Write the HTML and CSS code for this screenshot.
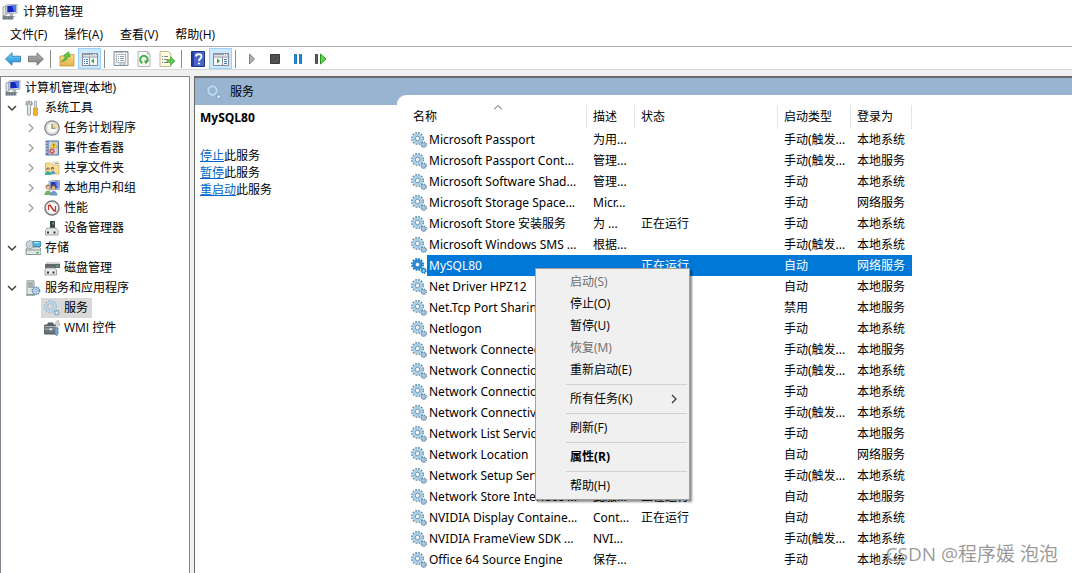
FILE: index.html
```html
<!DOCTYPE html>
<html lang="zh-CN">
<head>
<meta charset="utf-8">
<title>计算机管理</title>
<link rel="stylesheet" href="styles.css">
</head>
<body>
<svg class="defs" aria-hidden="true">
  <defs>
    <linearGradient id="gBlue" x1="0" y1="0" x2="0" y2="1"><stop offset="0" stop-color="#7fd0f7"/><stop offset="1" stop-color="#1689d6"/></linearGradient>
    <linearGradient id="gGrey" x1="0" y1="0" x2="0" y2="1"><stop offset="0" stop-color="#b5b5b5"/><stop offset="1" stop-color="#7c7c7c"/></linearGradient>
    <linearGradient id="gFolder" x1="0" y1="0" x2="0" y2="1"><stop offset="0" stop-color="#f8dc8b"/><stop offset="1" stop-color="#e4b44c"/></linearGradient>
    <symbol id="computer" viewBox="0 0 16 16">
      <path d="M1 3l3-1v9l-3 1z" fill="#e4e7e6" stroke="#7c8586" stroke-width=".7"/>
      <path d="M4 1l11-1v9l-11 1z" fill="#dde2e4" stroke="#8d989d" stroke-width=".7"/>
      <path d="M5.300 2l8.500-.8v6.600l-8.500.8z" fill="#1327bd"/>
      <path d="M10 1.600l3.800-.4v6.600l-1.600.1z" fill="#5577e8"/>
      <path d="M8 10h3v2h2v1H7z" fill="#b4bcbc"/>
      <path d="M.5 12h11v3.500H.5z" fill="#87969a"/>
      <path d="M1 13h10M1 14.800h10" stroke="#56656b" stroke-dasharray="1.600 1"/>
    </symbol>
    <symbol id="tools" viewBox="0 0 16 16">
      <path d="M2 1.200C0 3 .8 5.600 2.500 6.400V14c0 1.800 3 1.800 3 0V6.400c2-.9 2.600-3.600.7-5.200v3.400H4.800V1H3.200v3.600H2z" fill="#e6e9e9" stroke="#7b8588" stroke-width=".8"/>
      <path d="M9.500 1h2v6h-2z" fill="#d8dcdd" stroke="#8d9698" stroke-width=".6"/>
      <path d="M8.500 8h4v2l-.7 1 .7 1v3l-1 .8H9.500l-1-.8v-3l.7-1-.7-1z" fill="#f5b326" stroke="#c98509" stroke-width=".7"/>
    </symbol>
    <symbol id="clock" viewBox="0 0 16 16">
      <circle cx="8" cy="8" r="7.200" fill="#e4e7ea" stroke="#7e878c" stroke-width="1.300"/>
      <circle cx="8" cy="8" r="5.400" fill="#fffaf0" stroke="#c2cbd1" stroke-width=".8"/>
      <path d="M8 2.600A5.400 5.400 0 0 1 13.400 8H8z" fill="#f5d698"/>
      <path d="M8 4v4.200h3.500" fill="none" stroke="#607a91" stroke-width="1.100"/>
    </symbol>
    <symbol id="event" viewBox="0 0 16 16">
      <path d="M2 1h12.500v14H2z" fill="#abc1d8" stroke="#5b7ba0"/>
      <path d="M5 2h8v12H5z" fill="#c9d7e7"/>
      <path d="M3.500 1v14" stroke="#5878a0" stroke-width="2"/>
      <path d="M1 3h3M1 6h3M1 9h3M1 12h3" stroke="#e3e7ea" stroke-width=".9"/>
      <path d="M9.700 1.800l3.500 6h-7z" fill="#ffd531" stroke="#c89b18" stroke-width=".5"/>
      <path d="M9.700 4v2M9.700 6.600v.8" stroke="#333" stroke-width=".8"/>
      <circle cx="8" cy="11.200" r="2.600" fill="#d65050"/>
      <path d="M7 10.200l2 2m0-2l-2 2" stroke="#fff" stroke-width=".8"/>
    </symbol>
    <symbol id="folder" viewBox="0 0 16 16">
      <path d="M1.500 3h5l1.500 1.500h7V14H1.500z" fill="#f7dc95" stroke="#cfa650" stroke-width=".7"/>
      <path d="M9 2h6v3H9z" fill="#f9f4e0" stroke="#d1b56e" stroke-width=".6"/><path d="M11 3.500h3" stroke="#51a3d8"/>
      <circle cx="4" cy="9" r="1.600" fill="#594b31"/><circle cx="8.500" cy="8.600" r="1.600" fill="#594b31"/>
      <circle cx="4.200" cy="9.800" r="1.200" fill="#edc293"/><circle cx="8.600" cy="9.400" r="1.200" fill="#edc293"/>
      <path d="M1 15c0-5 6-5 6 0z" fill="#39b09a"/><path d="M6.300 14c0-4 5-4 5 0z" fill="#4f98c5"/>
    </symbol>
    <symbol id="users" viewBox="0 0 16 16">
      <path d="M5 1l10.500-.7v9L5 10z" fill="#dfe3e5" stroke="#86959c" stroke-width=".8"/><path d="M6.500 2l7.800-.5v6.700l-7.800.5z" fill="#1a38c6"/><path d="M11 1.700l3.300-.2v6.700l-1.300.1z" fill="#6783e5"/>
      <circle cx="4" cy="7" r="2.500" fill="#a2875e"/><circle cx="4.200" cy="7.800" r="1.700" fill="#edc08c"/>
      <circle cx="9.500" cy="7" r="2.500" fill="#6f5a49"/><circle cx="9.500" cy="8" r="1.700" fill="#edc08c"/>
      <path d="M.5 15c0-6 7-6 7 0z" fill="#7dae69"/><path d="M6 15.500c0-6 7.500-6 7.500 0z" fill="#6d9bc2"/>
    </symbol>
    <symbol id="perf" viewBox="0 0 16 16">
      <circle cx="8" cy="8" r="7" fill="#fff" stroke="#777" stroke-width="1.500"/><circle cx="8" cy="8" r="5.300" fill="none" stroke="#d4d7d8" stroke-width=".8"/>
      <path d="M4.500 10V5.500h1.500M11.500 6v5l-2-1" fill="none" stroke="#d12e2e" stroke-width="1.200"/><path d="M5.500 4.500l5 7" stroke="#c92323" stroke-width="1.300"/>
    </symbol>
    <symbol id="device" viewBox="0 0 16 16">
      <path d="M6 1h5v8H6z" fill="#3e4547"/><path d="M8.500 2.500h1.500v2H8.500z" fill="#51cf61"/>
      <path d="M3 8h9l2 2.500v4.500H1.500v-4.500z" fill="#e4e6e7" stroke="#8a9194" stroke-width=".8"/><path d="M3 11.500h2v2H3zM9.500 11.500h2v2h-2z" fill="#303638"/>
    </symbol>
    <symbol id="storage" viewBox="0 0 16 16">
      <path d="M1 9l2-2h11l2 2v5.500H1z" fill="#e1e4e5" stroke="#788184" stroke-width=".8"/><path d="M1 10h15" stroke="#8c9597"/><path d="M11 12h3v1.300h-3z" fill="#3ec646"/>
      <circle cx="5" cy="4.700" r="4" fill="#d5dcdf" stroke="#8e999d" stroke-width=".8"/><circle cx="5" cy="4.700" r="1.200" fill="#fff" stroke="#8e999d" stroke-width=".6"/>
      <path d="M8 1.500h7.500v5H8z" fill="#56b6e4" stroke="#237ba6" stroke-width=".8"/><path d="M9 2.500h5" stroke="#bbe8fa"/>
    </symbol>
    <symbol id="disk" viewBox="0 0 16 16">
      <path d="M4 2h10l2 2v4H1V4.500z" fill="#62696c"/><path d="M4 2h10l2 2H2z" fill="#d2d7d9"/><path d="M12 5.500h2.500v1.200H12z" fill="#45d65b"/>
      <path d="M2 8h9l1.500 2v5H1v-5z" fill="#e7e9ea" stroke="#8a9194" stroke-width=".8"/><path d="M3 11.500h2v2H3zM8.500 11.500h2v2h-2z" fill="#303638"/>
    </symbol>
    <symbol id="gears" viewBox="0 0 16 16">
      <circle cx="6.500" cy="6.500" r="5.600" fill="none" stroke="#5b83a5" stroke-width="1.700" stroke-dasharray="1.700 1.230"/>
      <circle cx="6.500" cy="6.500" r="3.800" fill="#f7fbfd" stroke="#a9cfe7" stroke-width="2.800"/>
      <circle cx="6.500" cy="6.500" r="2.200" fill="#fff" stroke="#5a84a8" stroke-width=".9"/>
      <circle cx="12.700" cy="12.700" r="2.500" fill="#b7d3e5" stroke="#5b83a5" stroke-width="1.400" stroke-dasharray="1.200 .76"/>
      <circle cx="12.700" cy="12.700" r=".8" fill="#f6fbff" stroke="#638bab" stroke-width=".5"/>
    </symbol>
    <symbol id="gearsSoft" viewBox="0 0 16 16">
      <circle cx="6.500" cy="6.500" r="5.600" fill="none" stroke="#89adc7" stroke-width="1.300" stroke-dasharray="1.700 1.230"/>
      <circle cx="6.500" cy="6.500" r="4.100" fill="none" stroke="#b9daee" stroke-width="2.200"/>
      <circle cx="6.500" cy="6.500" r="2.900" fill="none" stroke="#86abc6" stroke-width=".6"/>
      <circle cx="12.700" cy="12.700" r="2.300" fill="#b7d3e5" stroke="#7b9eb8" stroke-width="1.300" stroke-dasharray="1.200 .6"/><circle cx="12.700" cy="12.700" r=".7" fill="#fff"/>
    </symbol>
    <symbol id="gearsHot" viewBox="0 0 16 16">
      <circle cx="6.500" cy="6.500" r="5.600" fill="none" stroke="#0873c6" stroke-width="1.700" stroke-dasharray="1.700 1.230"/>
      <circle cx="6.500" cy="6.500" r="3.700" fill="#fff" stroke="#2a89d2" stroke-width="2.900"/><circle cx="6.500" cy="6.500" r="2.200" fill="#fff" stroke="#176fb4" stroke-width=".8"/>
      <circle cx="12.700" cy="12.700" r="2.400" fill="#4ba2df" stroke="#086fc0" stroke-width="1.400" stroke-dasharray="1.200 .76"/><circle cx="12.700" cy="12.700" r=".7" fill="#fff"/>
    </symbol>
    <symbol id="server" viewBox="0 0 16 16">
      <path d="M2 .8h7v14H2z" fill="#e1e5e5" stroke="#848e91" stroke-width=".9"/><path d="M3 3h5M3 5h5M3 7h5" stroke="#616b6e" stroke-width=".9"/><path d="M6.500 9.500h1.500" stroke="#49bd50"/><path d="M1 15h9" stroke="#727c80"/>
      <circle cx="11" cy="10.800" r="3.500" fill="#d8e8f3" stroke="#618eb4" stroke-width="1.700" stroke-dasharray="1.500 .7"/><circle cx="11" cy="10.800" r="1.300" fill="#fff" stroke="#618eb4" stroke-width=".8"/>
    </symbol>
    <symbol id="wmi" viewBox="0 0 16 16">
      <path d="M4 5V3h5v2M.7 5h12v9H.7z" fill="#69747b" stroke="#4a5358"/><path d="M.7 6.500h12M.7 9h12" stroke="#acb5b9"/><path d="M5.500 8.300h2.500v2H5.500z" fill="#e8ebed"/>
      <path d="M11 8l1-4c-1-2 1-4 3-3l-1.500 2 1 1.300L16 3c0 2-1 3-2.500 3.200L13 8z" fill="#e5e9ec" stroke="#7c878d" stroke-width=".6"/><path d="M11 8h3v6l-1.500 1.800L11 14z" fill="#7aa9d5" stroke="#4471a5" stroke-width=".7"/>
    </symbol>
    <symbol id="back" viewBox="0 0 16 16"><path d="M.5 8L7 1.800v3.400h8.500v5.600H7v3.400z" fill="url(#gBlue)" stroke="#1878b8" stroke-width=".8"/></symbol>
    <symbol id="forward" viewBox="0 0 16 16"><path d="M15.500 8L9 1.800v3.400H.5v5.600H9v3.400z" fill="url(#gGrey)" stroke="#6d6d6d" stroke-width=".8"/></symbol>
    <symbol id="up" viewBox="0 0 16 16"><path d="M1 5h6l1-1.500h7V15H1z" fill="url(#gFolder)" stroke="#c79a3d" stroke-width=".8"/><path d="M2.500 10.500C5 9 6 7 6.300 4.800L4.500 4.500 9.500.8l1.800 5-1.800-.5c-.8 3-3.500 5-7 5.200z" fill="#5ccb45" stroke="#2d9428" stroke-width=".6"/></symbol>
    <symbol id="treeview" viewBox="0 0 16 16"><path d="M.5 2.500h15v12H.5z" fill="#f7f9fb" stroke="#858b94"/><path d="M1 3.500h14" stroke="#9aa2b0" stroke-width="1.600"/><path d="M1 6h14M7.500 6v8" stroke="#8a919b"/><path d="M11 3.500h1M13 3.500h1" stroke="#fff"/><path d="M2 8.500h1m1 0h2M2 10.500h1m1 0h2M2 12.500h1m1 0h2" stroke="#4477b9"/><path d="M12 7.500v5L9 10z" fill="#27b02f"/></symbol>
    <symbol id="actions" viewBox="0 0 16 16"><path d="M.5 2.500h15v12H.5z" fill="#f7f9fb" stroke="#858b94"/><path d="M1 3.500h14" stroke="#9aa2b0" stroke-width="1.600"/><path d="M1 6h14M9.500 6v8" stroke="#8a919b"/><path d="M11 3.500h1M13 3.500h1" stroke="#fff"/><path d="M11 8.500h3m-3 2h3m-3 2h3" stroke="#4477b9"/><path d="M4 7.500v5l3-2.500z" fill="#27b02f"/></symbol>
    <symbol id="props" viewBox="0 0 16 16"><path d="M1 .5h14v14H1z" fill="#f1f3f4" stroke="#8a9095"/><path d="M1.500 1.500h9" stroke="#b9bec6"/><path d="M12 1.500h1m1 0h1" stroke="#8a9095"/><path d="M3.500 3.500h9v8h-9z" fill="#fff" stroke="#a3a8ad" stroke-width=".8"/><path d="M5 5.500h1m1 0h4M5 7.500h1m1 0h4M5 9.500h1m1 0h4" stroke="#8397b1" stroke-width=".9"/><path d="M6.500 13h2.500m1 0h2.500" stroke="#4aa7d6"/></symbol>
    <symbol id="refresh" viewBox="0 0 16 16"><path d="M2 .5h9.500L14 3v12.500H2z" fill="#fafafa" stroke="#9ea1a3" stroke-width=".8"/><path d="M11.500.5V3H14" fill="none" stroke="#9ea1a3" stroke-width=".8"/><path d="M6.500 12A3.700 3.700 0 1 1 11.300 10" fill="none" stroke="#3fb13f" stroke-width="2"/><path d="M8 9.500h5L9.800 13.300z" fill="#3aa83a"/></symbol>
    <symbol id="export" viewBox="0 0 16 16"><path d="M1 .5h8.500L12 3v12.500H1z" fill="#fff9df" stroke="#b2aa83" stroke-width=".8"/><path d="M3 5.500h1m1 0h4M3 8.500h1m1 0h3M3 11.500h1m1 0h4" stroke="#7b8490"/><path d="M8 8.500h3.500V5.500L16 10l-4.500 4.500v-3H8z" fill="#5ccb45" stroke="#2d9a2f" stroke-width=".5"/></symbol>
    <symbol id="help" viewBox="0 0 16 16"><path d="M1.500.5h13v15h-13z" fill="#4965c6" stroke="#1d3486"/><path d="M3 .5v15" stroke="#253e9a" stroke-width="2"/><path d="M6 5.500c0-3 5.500-3 5.500 0C11.500 7.500 9 7.500 9 10" fill="none" stroke="#fff" stroke-width="1.800"/><circle cx="9" cy="12.500" r="1.100" fill="#fff"/></symbol>
    <symbol id="play" viewBox="0 0 16 16"><path d="M5.500 3v10l5-5z" fill="#b0b0b0" stroke="#7c7c7c"/></symbol>
    <symbol id="stop" viewBox="0 0 16 16"><path d="M3.500 3.500h9v9h-9z" fill="#505050" stroke="#3a3a3a"/></symbol>
    <symbol id="pause" viewBox="0 0 16 16"><path d="M4.500 3.500h2v9h-2zM9.500 3.500h2v9h-2z" fill="#2593df" stroke="#1474b7"/></symbol>
    <symbol id="restart" viewBox="0 0 16 16"><path d="M2.500 3.500h2v9h-2z" fill="#666" stroke="#444"/><path d="M7.500 3v10l5.500-5z" fill="#5ed44d" stroke="#299b22"/></symbol>
    <symbol id="chevDown" viewBox="0 0 10 10"><path d="M1 3l4 4 4-4" fill="none" stroke="#404040" stroke-width="1.500"/></symbol>
    <symbol id="chevRight" viewBox="0 0 10 10"><path d="M3 1l4 4-4 4" fill="none" stroke="#a0a0a0" stroke-width="1.400"/></symbol>
  </defs>
</svg>
<div class="window">
  <header class="titlebar"><svg class="icon"><use href="#computer"/></svg><h1>计算机管理</h1></header>
  <nav class="menubar"><button>文件(F)</button><button>操作(A)</button><button>查看(V)</button><button>帮助(H)</button></nav>
  <div class="toolbar" role="toolbar" aria-label="工具栏">
    <button aria-label="后退"><svg class="icon"><use href="#back"/></svg></button>
    <button aria-label="前进"><svg class="icon"><use href="#forward"/></svg></button>
    <span class="divider"></span>
    <button aria-label="上移一级"><svg class="icon"><use href="#up"/></svg></button>
    <button class="on" aria-label="显示控制台树"><svg class="icon"><use href="#treeview"/></svg></button>
    <span class="divider"></span>
    <button aria-label="属性"><svg class="icon"><use href="#props"/></svg></button>
    <button aria-label="刷新"><svg class="icon"><use href="#refresh"/></svg></button>
    <button aria-label="导出列表"><svg class="icon"><use href="#export"/></svg></button>
    <span class="divider"></span>
    <button aria-label="帮助"><svg class="icon"><use href="#help"/></svg></button>
    <button class="on" aria-label="显示操作窗格"><svg class="icon"><use href="#actions"/></svg></button>
    <span class="divider"></span>
    <button aria-label="启动服务"><svg class="icon"><use href="#play"/></svg></button>
    <button aria-label="停止服务"><svg class="icon"><use href="#stop"/></svg></button>
    <button aria-label="暂停服务"><svg class="icon"><use href="#pause"/></svg></button>
    <button aria-label="重启动服务"><svg class="icon"><use href="#restart"/></svg></button>
  </div>
  <main class="workspace">
    <aside class="tree">
      <ul>
        <li class="root"><svg class="icon"><use href="#computer"/></svg><span>计算机管理(本地)</span></li>
        <li><svg class="chev"><use href="#chevDown"/></svg><svg class="icon"><use href="#tools"/></svg><span>系统工具</span></li>
        <li class="sub"><svg class="chev"><use href="#chevRight"/></svg><svg class="icon"><use href="#clock"/></svg><span>任务计划程序</span></li>
        <li class="sub"><svg class="chev"><use href="#chevRight"/></svg><svg class="icon"><use href="#event"/></svg><span>事件查看器</span></li>
        <li class="sub"><svg class="chev"><use href="#chevRight"/></svg><svg class="icon"><use href="#folder"/></svg><span>共享文件夹</span></li>
        <li class="sub"><svg class="chev"><use href="#chevRight"/></svg><svg class="icon"><use href="#users"/></svg><span>本地用户和组</span></li>
        <li class="sub"><svg class="chev"><use href="#chevRight"/></svg><svg class="icon"><use href="#perf"/></svg><span>性能</span></li>
        <li class="leaf"><svg class="icon"><use href="#device"/></svg><span>设备管理器</span></li>
        <li><svg class="chev"><use href="#chevDown"/></svg><svg class="icon"><use href="#storage"/></svg><span>存储</span></li>
        <li class="leaf"><svg class="icon"><use href="#disk"/></svg><span>磁盘管理</span></li>
        <li><svg class="chev"><use href="#chevDown"/></svg><svg class="icon"><use href="#server"/></svg><span>服务和应用程序</span></li>
        <li class="leaf current"><svg class="icon"><use href="#gearsSoft"/></svg><span>服务</span></li>
        <li class="leaf"><svg class="icon"><use href="#wmi"/></svg><span>WMI 控件</span></li>
      </ul>
    </aside>
    <section class="content">
      <div class="band"><h2><svg class="icon"><use href="#gearsSoft"/></svg>服务</h2><div class="tab"></div></div>
      <div class="split">
        <div class="detail">
          <h3>MySQL80</h3>
          <p><a href="#stop">停止</a>此服务</p>
          <p><a href="#pause">暂停</a>此服务</p>
          <p><a href="#restart">重启动</a>此服务</p>
        </div>
        <div class="list">
          <table>
            <colgroup><col class="c-name"><col class="c-desc"><col class="c-state"><col class="c-type"><col class="c-logon"></colgroup>
            <thead><tr><th class="sorted">名称<svg class="sort" viewBox="0 0 8 5"><path d="M0 4.500l4-4 4 4" fill="none" stroke="#555"/></svg></th><th>描述</th><th>状态</th><th>启动类型</th><th>登录为</th></tr></thead>
            <tbody>
              <tr><td><svg class="icon"><use href="#gears"/></svg><span>Microsoft Passport</span></td><td>为用...</td><td></td><td>手动(触发...</td><td>本地系统</td></tr>
              <tr><td><svg class="icon"><use href="#gears"/></svg><span>Microsoft Passport Cont...</span></td><td>管理...</td><td></td><td>手动(触发...</td><td>本地服务</td></tr>
              <tr><td><svg class="icon"><use href="#gears"/></svg><span>Microsoft Software Shad...</span></td><td>管理...</td><td></td><td>手动</td><td>本地系统</td></tr>
              <tr><td><svg class="icon"><use href="#gears"/></svg><span>Microsoft Storage Space...</span></td><td>Micr...</td><td></td><td>手动</td><td>网络服务</td></tr>
              <tr><td><svg class="icon"><use href="#gears"/></svg><span>Microsoft Store 安装服务</span></td><td>为 ...</td><td>正在运行</td><td>手动</td><td>本地系统</td></tr>
              <tr><td><svg class="icon"><use href="#gears"/></svg><span>Microsoft Windows SMS ...</span></td><td>根据...</td><td></td><td>手动(触发...</td><td>本地系统</td></tr>
              <tr class="selected"><td><svg class="icon"><use href="#gearsHot"/></svg><span>MySQL80</span></td><td></td><td>正在运行</td><td>自动</td><td>网络服务</td></tr>
              <tr><td><svg class="icon"><use href="#gears"/></svg><span>Net Driver HPZ12</span></td><td></td><td></td><td>自动</td><td>本地服务</td></tr>
              <tr><td><svg class="icon"><use href="#gears"/></svg><span>Net.Tcp Port Sharing</span></td><td></td><td></td><td>禁用</td><td>本地服务</td></tr>
              <tr><td><svg class="icon"><use href="#gears"/></svg><span>Netlogon</span></td><td></td><td></td><td>手动</td><td>本地系统</td></tr>
              <tr><td><svg class="icon"><use href="#gears"/></svg><span>Network Connected</span></td><td></td><td></td><td>手动(触发...</td><td>本地服务</td></tr>
              <tr><td><svg class="icon"><use href="#gears"/></svg><span>Network Connection</span></td><td></td><td></td><td>手动(触发...</td><td>本地系统</td></tr>
              <tr><td><svg class="icon"><use href="#gears"/></svg><span>Network Connections</span></td><td></td><td></td><td>手动</td><td>本地系统</td></tr>
              <tr><td><svg class="icon"><use href="#gears"/></svg><span>Network Connectivity</span></td><td></td><td></td><td>手动(触发...</td><td>本地系统</td></tr>
              <tr><td><svg class="icon"><use href="#gears"/></svg><span>Network List Service</span></td><td></td><td></td><td>手动</td><td>本地服务</td></tr>
              <tr><td><svg class="icon"><use href="#gears"/></svg><span>Network Location</span></td><td></td><td></td><td>自动</td><td>网络服务</td></tr>
              <tr><td><svg class="icon"><use href="#gears"/></svg><span>Network Setup Service</span></td><td></td><td></td><td>手动(触发...</td><td>本地系统</td></tr>
              <tr><td><svg class="icon"><use href="#gears"/></svg><span>Network Store Interface ...</span></td><td>此服...</td><td>正在运行</td><td>自动</td><td>本地服务</td></tr>
              <tr><td><svg class="icon"><use href="#gears"/></svg><span>NVIDIA Display Containe...</span></td><td>Cont...</td><td>正在运行</td><td>自动</td><td>本地系统</td></tr>
              <tr><td><svg class="icon"><use href="#gears"/></svg><span>NVIDIA FrameView SDK ...</span></td><td>NVI...</td><td></td><td>手动(触发...</td><td>本地系统</td></tr>
              <tr><td><svg class="icon"><use href="#gears"/></svg><span>Office 64 Source Engine</span></td><td>保存...</td><td></td><td>手动</td><td>本地系统</td></tr>
              <tr><td><svg class="icon"><use href="#gears"/></svg></td><td></td><td></td><td></td><td></td></tr>
            </tbody>
          </table>
        </div>
      </div>
    </section>
  </main>
  <div class="context" role="menu">
    <button role="menuitem" disabled>启动(S)</button>
    <button role="menuitem">停止(O)</button>
    <button role="menuitem">暂停(U)</button>
    <button role="menuitem" disabled>恢复(M)</button>
    <button role="menuitem">重新启动(E)</button>
    <hr>
    <button role="menuitem">所有任务(K)<svg class="more" viewBox="0 0 10 10"><path d="M3 1l4 4-4 4" fill="none" stroke="#333" stroke-width="1.200"/></svg></button>
    <hr>
    <button role="menuitem">刷新(F)</button>
    <hr>
    <button role="menuitem" class="default">属性(R)</button>
    <hr>
    <button role="menuitem">帮助(H)</button>
  </div>
  <div class="watermark">CSDN @程序媛 泡泡</div>
</div>
</body>
</html>
```
FILE: styles.css
```css
* { box-sizing: border-box; }
body {
  margin: 0;
  font: 12px/20px "Open Sans", "Noto Sans CJK SC", sans-serif;
  color: #000;
  background: #f0f0f0;
}
h1, h2, h3, p, ul { margin: 0; padding: 0; font-size: 12px; font-weight: 400; }
button {
  border: 0;
  padding: 0;
  background: none;
  font: inherit;
  color: inherit;
}
.defs { position: absolute; width: 0; height: 0; }
.icon { width: 16px; height: 16px; flex: none; display: block; }
.window {
  position: relative;
  display: flex;
  flex-direction: column;
  height: 100vh;
  overflow: hidden;
}
.titlebar {
  display: flex;
  align-items: center;
  gap: 5px;
  height: 23px;
  padding-left: 2px;
  background: #fff;
}
.menubar {
  display: flex;
  gap: 17px;
  height: 24px;
  padding-left: 10px;
  background: #fff;
  border-bottom: 1px solid #a9a9a9;
}
.toolbar {
  display: flex;
  align-items: center;
  height: 23px;
  padding: 1px 0 0 1px;
  background: #fff;
  border-bottom: 1px solid #d5d5d5;
}
.toolbar button {
  display: flex;
  align-items: center;
  justify-content: center;
  width: 23px;
  height: 21px;
}
.toolbar .on { background: #cce8ff; border: 1px solid #99d1ff; }
.divider { width: 1px; height: 18px; margin: 0 4px 0 3px; background: #8b8b8b; }
.workspace {
  display: flex;
  flex: 1;
  gap: 4px;
  min-height: 0;
  padding-top: 6px;
}
.tree {
  flex: none;
  width: 190px;
  padding-top: 1px;
  background: #fff;
  border: 1px solid #828790;
  border-bottom: 0;
}
.tree ul { list-style: none; }
.tree li {
  display: flex;
  align-items: center;
  height: 20px;
  padding-left: 6px;
}
.tree li span { padding: 0 4px; }
.tree .root { padding-left: 4px; }
.tree .sub { padding-left: 25px; }
.tree .leaf { padding-left: 43px; }
.tree .current { margin-left: 40px; padding-left: 3px; width: 51px; background: #d9d9d9; }
.chev { width: 10px; height: 10px; margin-right: 8px; flex: none; }
.content {
  display: flex;
  flex-direction: column;
  flex: 1;
  min-width: 0;
  background: #fff;
  border-top: 2px solid #696969;
  border-left: 1px solid #696969;
}
.band {
  display: flex;
  align-items: flex-end;
  height: 27px;
  flex: none;
  background: #99b4d1;
}
.band h2 {
  display: flex;
  align-items: center;
  gap: 8px;
  width: 202px;
  height: 27px;
  padding-left: 11px;
}
.tab { flex: 1; height: 10px; background: #fff; border-top-left-radius: 9px; }
.split { display: flex; flex: 1; min-height: 0; }
.detail { width: 216px; flex: none; padding: 3px 0 0 5px; }
.detail h3 { margin-bottom: 19px; font-size: 12px; font-weight: 700; }
.detail p { line-height: 17px; }
.detail a { color: #0066cc; }
.list { flex: 1; min-width: 0; overflow: hidden; }
table {
  width: 501px;
  table-layout: fixed;
  border-collapse: separate;
  border-spacing: 0;
  font-family: "Noto Sans", "Noto Sans CJK SC", sans-serif;
}
.c-name { width: 176px; }
.c-desc { width: 48px; }
.c-state { width: 143px; }
.c-type { width: 73px; }
.c-logon { width: 61px; }
th {
  height: 24px;
  padding: 0 0 0 6px;
  text-align: left;
  font-weight: 400;
  border-right: 1px solid #e5e5e5;
}
.sorted { position: relative; padding-left: 2px; }
.sort { position: absolute; top: 0; left: 83px; width: 8px; height: 5px; }
td {
  height: 21px;
  padding: 0 0 0 6px;
  white-space: nowrap;
  overflow: hidden;
}
td:first-child { display: flex; align-items: center; padding: 0; }
td:first-child span { flex: 1; padding-left: 2px; line-height: 21px; }
.selected { color: #fff; }
.selected span, .selected td + td { background: #0078d7; }
.context {
  position: absolute;
  top: 268px;
  left: 535px;
  width: 155px;
  padding: 2px;
  background: #f0f0f0;
  border: 1px solid #a0a0a0;
  box-shadow: 2px 2px 2px rgba(0, 0, 0, .45);
}
.context button {
  display: flex;
  align-items: center;
  justify-content: space-between;
  width: 100%;
  height: 22px;
  padding: 0 8px 0 32px;
}
.context button:disabled { color: #6d6d6d; }
.context .default { font-weight: 700; }
.context hr { margin: 3px 0 3px 28px; border: 0; border-top: 1px solid #d0d0d0; }
.more { width: 10px; height: 10px; }
.watermark {
  position: absolute;
  right: 14px;
  bottom: 6px;
  font-size: 19px;
  line-height: 26px;
  color: rgba(120, 120, 120, .75);
  text-shadow: 1px 1px 1px #fff;
}
```
